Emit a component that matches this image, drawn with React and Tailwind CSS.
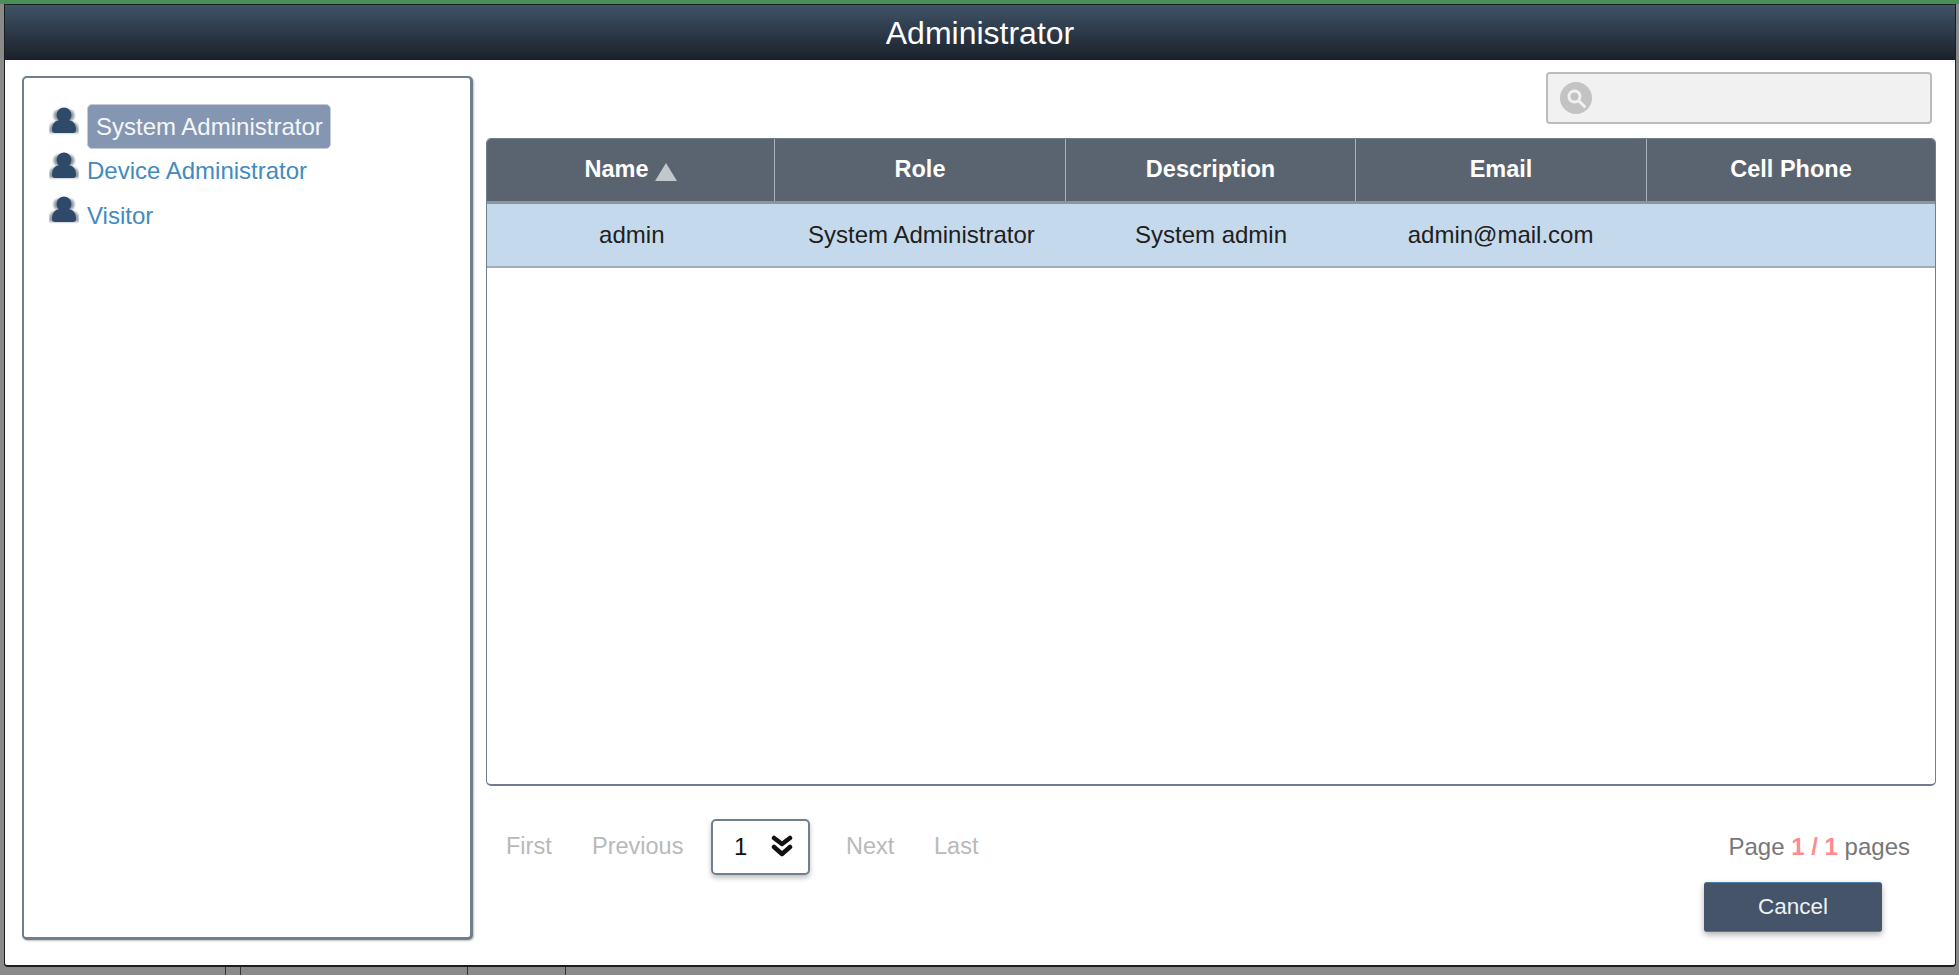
const columns = ["Name", "Role", "Description", "Email", "Cell Phone"];
const row = ["admin", "System Administrator", "System admin", "admin@mail.com", ""];
const ticks = ["ml-[225px]", "ml-[14px]", "ml-[226px]", "ml-[97px]"];

const UserIcon = () => (
  <svg width="30" height="28" viewBox="0 0 30 28" className="shrink-0">
    <g fill="#8f99a5" className="blur-[1px]">
      <circle cx="10.500" cy="8.500" r="6" />
      <circle cx="19.500" cy="8.500" r="6" />
      <path d="M0 24c0-6 3-9 8-9h14c5 0 8 3 8 9 0 1-1 2-2 2H2c-1 0-2-1-2-2z" />
    </g>
    <circle cx="15" cy="8" r="7.500" fill="#2e4a68" />
    <path d="M3 23c0-6 3-10 9-10h6c6 0 9 4 9 10 0 2-1 3-3 3H6c-2 0-3-1-3-3z" fill="#2e4a68" />
  </svg>
);

const RoleItem = ({ label, selected }) => (
  <div className="flex items-start h-[44.500px]">
    <div className="w-[38px] ml-[1px] mt-[3px]">
      <UserIcon />
    </div>
    {selected ? (
      <span className="h-[45px] pl-[8px] pr-[7px] flex items-center rounded-[5px] bg-[#8496b2] border border-[#c4ccd8] text-[#f4f6f8] text-[24px] whitespace-nowrap">
        {label}
      </span>
    ) : (
      <span className="h-[45px] flex items-center text-[#428bc1] text-[24px] whitespace-nowrap">{label}</span>
    )}
  </div>
);

const Pager = ({ children }) => <span className="text-[#b9b9b9] text-[23.500px]">{children}</span>;

export default function App() {
  return (
    <div className="w-[1959px] h-[975px] overflow-hidden bg-[#8a8a8a] font-['Liberation_Sans',sans-serif] flex flex-col">
      <div className="h-[4px] bg-[#4a8f58] shrink-0" />
      <div className="ml-[4px] w-[1952px] h-[963px] shrink-0 flex flex-col bg-white border border-[#1b1d20] border-b-2 rounded-b-[4px] overflow-hidden">
        <div className="h-[55px] shrink-0 flex items-center justify-center bg-gradient-to-b from-[#3f5468] to-[#1b212b] text-white text-[32px]">
          Administrator
        </div>
        <div className="flex flex-1 min-h-0 pl-[17px] pr-[19px] pt-[16px]">
          <div className="w-[451px] h-[864px] shrink-0 rounded-[5px] border-2 border-[#6f7f8f] border-r-[3px] border-b-[3px] bg-white pl-[24px] pt-[26px] shadow-[1px_1px_2px_rgba(0,0,0,0.25)]">
            <RoleItem label="System Administrator" selected />
            <RoleItem label="Device Administrator" />
            <RoleItem label="Visitor" />
          </div>
          <div className="flex-1 min-w-0 ml-[13px] flex flex-col">
            <div className="h-[66px] shrink-0 flex justify-end mt-[-4px]">
              <div className="w-[386px] h-[52px] mr-[4px] rounded-[4px] bg-[#f1f1f1] border-2 border-[#bcbcbc] flex items-center pl-[12px]">
                <svg width="32" height="32" viewBox="0 0 32 32">
                  <circle cx="16" cy="16" r="16" fill="#c3c3c3" />
                  <circle cx="14.500" cy="14.500" r="5.500" fill="none" stroke="#f1f1f1" strokeWidth="3" />
                  <path d="M19 19l5.500 5.500" stroke="#f1f1f1" strokeWidth="3" strokeLinecap="round" />
                </svg>
              </div>
            </div>
            <div className="w-[1450px] h-[648px] shrink-0 flex flex-col rounded-[5px] overflow-hidden border border-[#6f7f8f] border-b-2 bg-white">
              <div className="h-[65px] shrink-0 grid grid-cols-[288px_291px_290px_291px_1fr] bg-[#5a6370] border-b-[3px] border-[#8d95a0]">
                {columns.map((col, i) => (
                  <div
                    key={col}
                    className={`flex items-center justify-center gap-[6px] text-white font-bold text-[23.500px] ${i < 4 ? "border-r border-[#a9b0b9]" : ""}`}
                  >
                    {col}
                    {i === 0 && (
                      <svg width="22" height="18" viewBox="0 0 22 18" className="mt-[4px]">
                        <path d="M11 0l11 18H0z" fill="#c3c6ca" />
                      </svg>
                    )}
                  </div>
                ))}
              </div>
              <div className="h-[64px] shrink-0 grid grid-cols-5 bg-[#c5d9ec] border-b-2 border-[#a3acb6] text-[#202020] text-[24px]">
                {row.map((cell, i) => (
                  <div key={i} className="flex items-center justify-center">
                    {cell}
                  </div>
                ))}
              </div>
            </div>
            <div className="h-[60px] shrink-0 mt-[31px] flex items-center">
              <div className="ml-[20px] w-[50px]"><Pager>First</Pager></div>
              <div className="ml-[36px] w-[92px] whitespace-nowrap"><Pager>Previous</Pager></div>
              <div className="ml-[27px] w-[99px] h-[56px] rounded-[5px] border-2 border-[#6f7f8f] shadow-[0_3px_5px_rgba(0,0,0,0.25)] flex items-center pl-[21px] text-[24px] text-[#111]">
                <span className="flex-1">1</span>
                <svg width="22" height="24" viewBox="0 0 22 24" className="mr-[15px]">
                  <path d="M3 3l8 6 8-6M3 12l8 7 8-7" fill="none" stroke="#111" strokeWidth="4.500" strokeLinecap="round" strokeLinejoin="round" />
                </svg>
              </div>
              <div className="ml-[36px] w-[50px]"><Pager>Next</Pager></div>
              <div className="ml-[38px]"><Pager>Last</Pager></div>
              <div className="ml-auto mr-[26px] text-[#777] text-[24px] whitespace-nowrap">
                Page <span className="text-[#ff8a8f] font-bold">1 / 1</span> pages
              </div>
            </div>
            <div className="flex justify-end mt-[5px] mr-[54px]">
              <button className="w-[178px] h-[50px] rounded-[3px] bg-[#455468] border-y border-[#4a7aa5] text-[#eef1f5] text-[22.500px] shadow-[0_3px_6px_rgba(0,0,0,0.3)]">
                Cancel
              </button>
            </div>
          </div>
        </div>
      </div>
      <div className="flex-1 flex">
        {ticks.map((tick) => (
          <div key={tick} className={`${tick} w-px bg-[#333]`} />
        ))}
      </div>
    </div>
  );
}
